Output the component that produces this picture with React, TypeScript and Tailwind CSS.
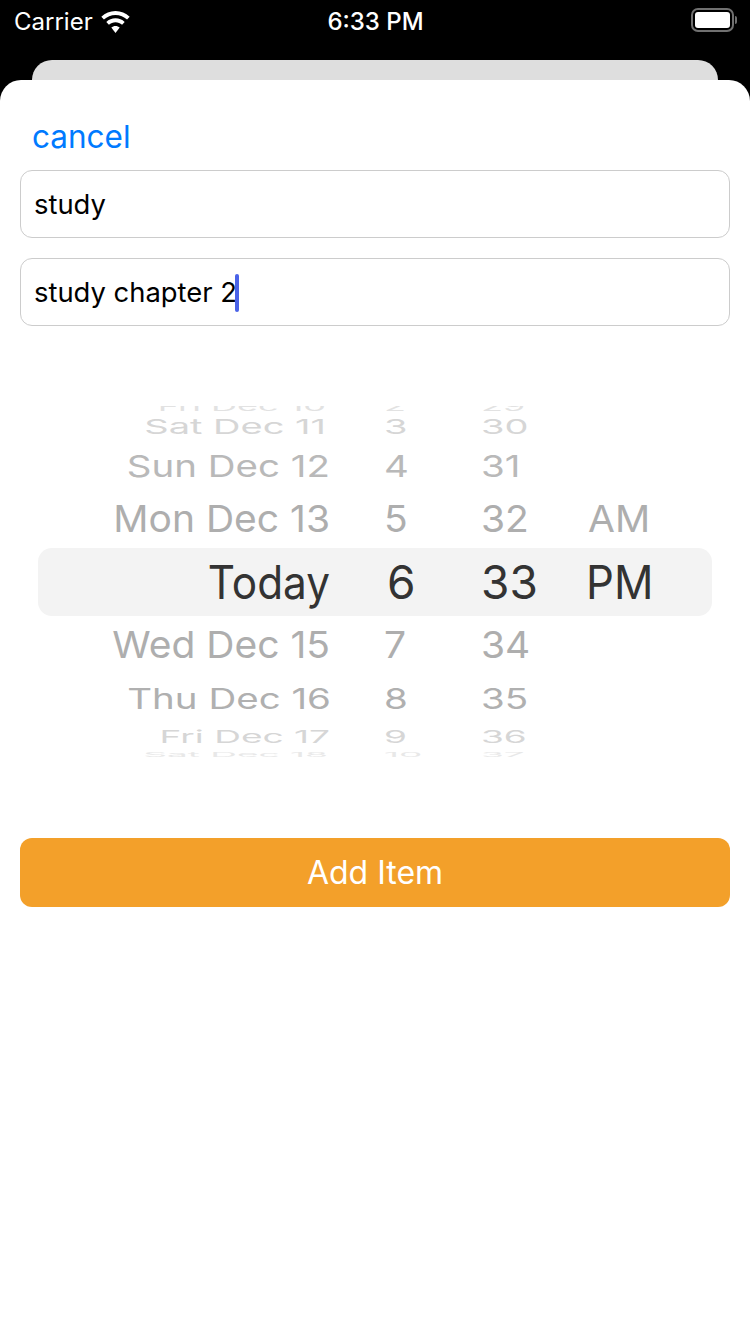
import React from "react";

const rows = [
  { date: "Fri Dec 10", hour: "2", minute: "29", ampm: "", height: "h-0", text: "text-[#e2e2e2] text-[36px] scale-y-[0.36]", dateClass: "-translate-x-[4px]" },
  { date: "Sat Dec 11", hour: "3", minute: "30", ampm: "", height: "h-[40px]", text: "text-[#d6d6d6] text-[38px] scale-y-[0.54]", dateClass: "-translate-x-[4px]" },
  { date: "Sun Dec 12", hour: "4", minute: "31", ampm: "", height: "h-[40px]", text: "text-[#b9b9b9] text-[38.500px] scale-y-[0.78]", dateClass: "" },
  { date: "Mon Dec 13", hour: "5", minute: "32", ampm: "AM", height: "h-[62px]", text: "text-[#aeaeae] text-[39px] scale-y-[0.96] translate-y-[2px]", dateClass: "" },
  { date: "Today", hour: "6", minute: "33", ampm: "PM", height: "h-[68px]", text: "text-[#333333] text-[46px]", dateClass: "scale-x-[0.92]", selected: true },
  { date: "Wed Dec 15", hour: "7", minute: "34", ampm: "", height: "h-[58px]", text: "text-[#aeaeae] text-[39px] scale-y-[0.96]", dateClass: "" },
  { date: "Thu Dec 16", hour: "8", minute: "35", ampm: "", height: "h-[50px]", text: "text-[#b0b0b0] text-[38.500px] scale-y-[0.74]", dateClass: "translate-x-[1px]" },
  { date: "Fri Dec 17", hour: "9", minute: "36", ampm: "", height: "h-[26px]", text: "text-[#d6d6d6] text-[37px] scale-y-[0.46]", dateClass: "" },
  { date: "Sat Dec 18", hour: "10", minute: "37", ampm: "", height: "h-[10px]", text: "text-[#e8e8e8] text-[37px] scale-y-[0.18]", dateClass: "-translate-x-[2px]" },
];

const Wifi = () => (
  <svg width="29" height="22" viewBox="2 0.6 25 19.4" fill="white">
    <path d="M14.5 4.2c3.900 0 7.500 1.500 10.200 4l2.300-2.500C23.600 2.500 19.300.6 14.500.6S5.400 2.500 2 5.700l2.300 2.500c2.700-2.500 6.300-4 10.200-4z" />
    <path d="M14.500 10.600c2.200 0 4.200.8 5.800 2.200l2.300-2.500c-2.200-2-5-3.200-8.100-3.200s-5.900 1.200-8.100 3.200l2.300 2.500c1.600-1.400 3.600-2.200 5.800-2.200z" />
    <path d="M14.500 13.800c-1.400 0-2.700.5-3.700 1.400l3.700 4.700 3.700-4.700c-1-.9-2.300-1.400-3.700-1.400z" />
  </svg>
);

const StatusBar = () => (
  <div className="flex h-[60px] items-start justify-between pl-[14px] pr-[13px] pt-[8px] text-white">
    <div className="flex items-center gap-[8px] w-[200px]">
      <span className="text-[24px] leading-[27px]">Carrier</span>
      <Wifi />
    </div>
    <span className="text-[24px] font-medium leading-[27px]">6:33 PM</span>
    <div className="flex w-[200px] justify-end items-center h-[24px]">
      <div className="flex h-[24px] w-[43px] items-center rounded-[7px] border-2 border-[#707070] p-[2px]">
        <div className="h-full w-full rounded-[3px] bg-white" />
      </div>
      <div className="ml-[1px] h-[8px] w-[2px] rounded-r-sm bg-[#707070]" />
    </div>
  </div>
);

const Field = ({ value, caret }: { value: string; caret?: boolean }) => (
  <div className="flex h-[68px] items-center rounded-[12px] border border-[#cccccc] bg-white pl-[13px] pt-[1px] text-[27.400px] text-black">
    <span>{value}</span>
    {caret && <span className="-ml-[2px] h-[38px] w-[4px] rounded-full bg-[#4a63e8]" />}
  </div>
);

const Picker = () => (
  <div className="mt-[80px] h-[351px] overflow-hidden">
    {rows.map((row) => (
      <div
        key={row.date}
        className={`mx-[38px] grid grid-cols-[292px_151px_107px_1fr] items-center ${row.height} ${
          row.selected ? "rounded-[14px] bg-[#f3f3f3]" : ""
        }`}
      >
        <span className={`origin-right whitespace-nowrap text-right leading-[0] ${row.text} ${row.dateClass}`}>
          {row.date}
        </span>
        <span className={`origin-left whitespace-nowrap leading-[0] ${row.text} ${row.selected ? "ml-[57px]" : "ml-[54px]"}`}>
          {row.hour}
        </span>
        <span className={`origin-left whitespace-nowrap leading-[0] ${row.text}`}>{row.minute}</span>
        <span className={`origin-left whitespace-nowrap leading-[0] ${row.text} ${row.selected ? "-ml-[2px] scale-x-[0.95]" : ""}`}>
          {row.ampm}
        </span>
      </div>
    ))}
  </div>
);

export default function App() {
  return (
    <div className="flex h-[1334px] w-[750px] flex-col overflow-hidden bg-black font-['Inter',sans-serif]">
      <StatusBar />
      <div className="mx-[32px] h-[40px] rounded-t-[20px] bg-[#dedede]" />
      <div className="relative -mt-[20px] flex flex-1 flex-col rounded-t-[21px] bg-white">
        <div className="pl-[32px] pt-[37px] text-[31.500px] leading-[40px] text-[#007aff]">cancel</div>
        <div className="mt-[13px] flex flex-col gap-[20px] px-[20px]">
          <Field value="study" />
          <Field value="study chapter 2" caret />
        </div>
        <Picker />
        <div className="mx-[20px] mt-[81px] flex h-[69px] items-center justify-center rounded-[12px] bg-[#f3a02a] text-[32px] text-white">
          Add Item
        </div>
      </div>
    </div>
  );
}
